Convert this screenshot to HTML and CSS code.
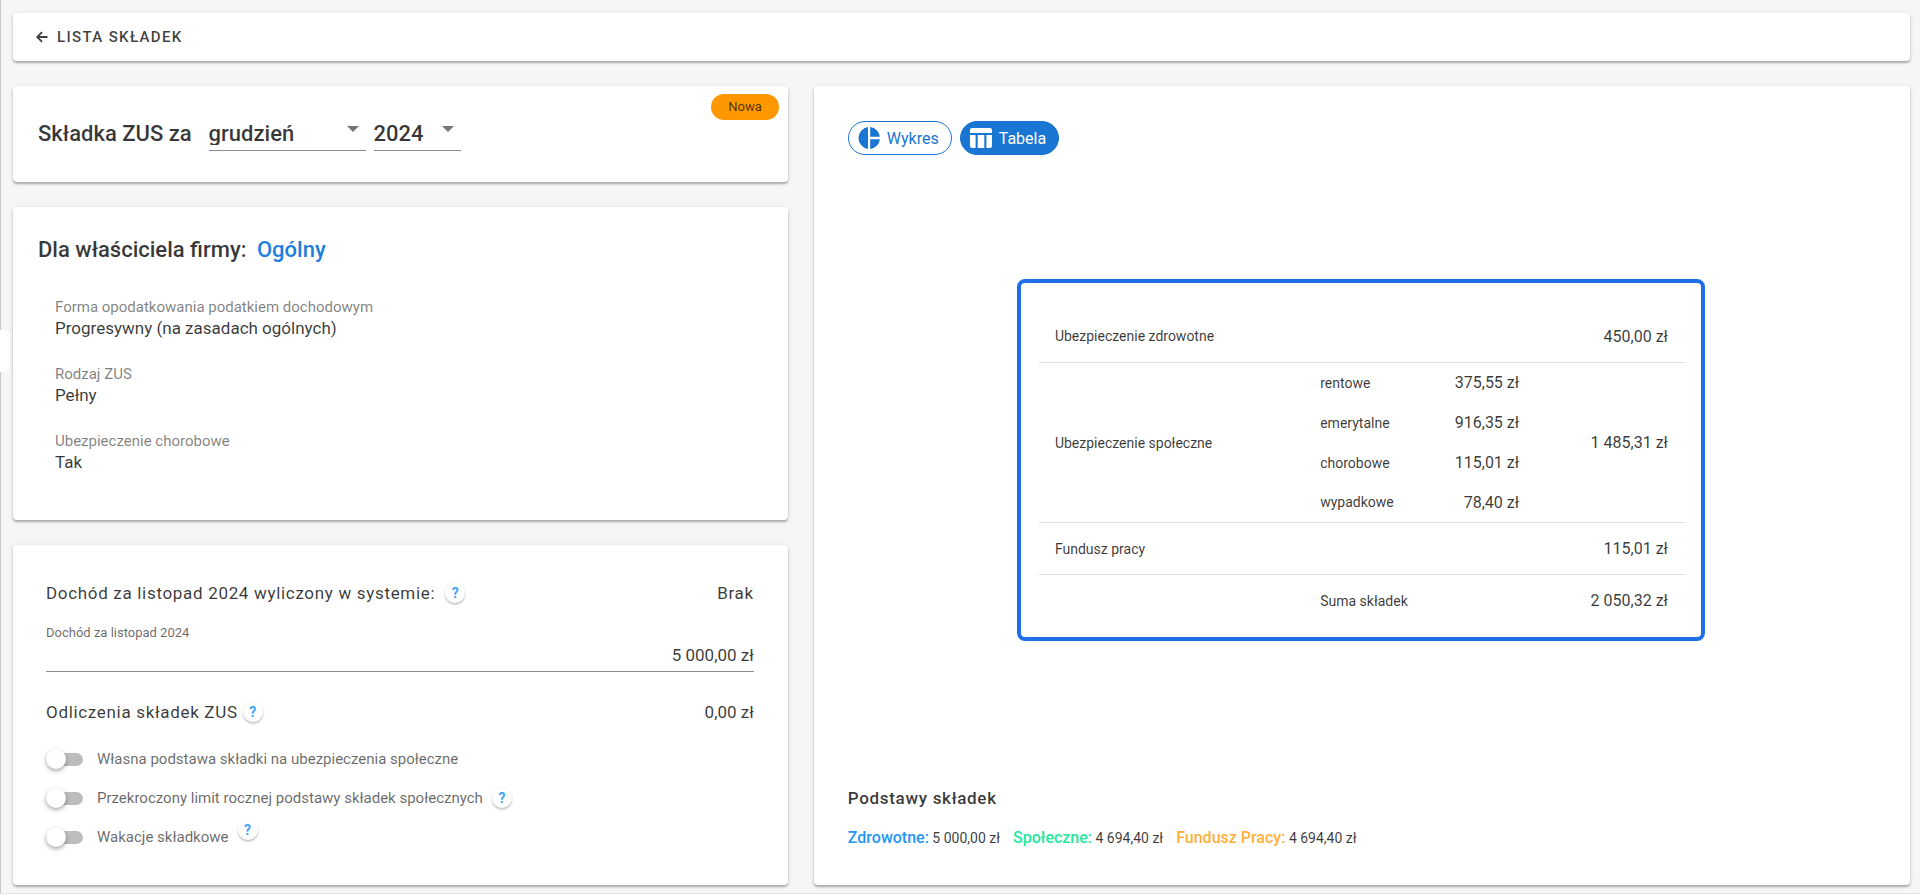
FILE: index.html
```html
<!DOCTYPE html>
<html lang="pl">
  <head>
    <meta charset="UTF-8" />
    <meta name="viewport" content="width=device-width, initial-scale=1.0" />
    <title>Składka ZUS - grudzień 2024</title>
    <link rel="stylesheet" href="styles.css">
  </head>
  <body>
    <button class="drawer-handle" type="button" aria-label="Otwórz menu"></button>

    <div class="page">
      <header class="card topbar">
        <a class="back-link" href="#">
          <svg width="12" height="12" viewBox="0 0 12 12" aria-hidden="true">
            <path d="M11.5 6H1.5M6 1.2L1.2 6L6 10.8" fill="none" stroke="currentColor" stroke-width="1.8" />
          </svg>
          LISTA SKŁADEK
        </a>
      </header>

      <main class="columns">
        <div class="left">
          <section class="card period">
            <h1 class="title">Składka ZUS za</h1>
            <div class="select month">
              <select aria-label="Miesiąc">
                <option>grudzień</option>
              </select>
            </div>
            <div class="select year">
              <select aria-label="Rok">
                <option>2024</option>
              </select>
            </div>
            <span class="badge">Nowa</span>
          </section>

          <section class="card owner">
            <h2 class="title">Dla właściciela firmy: <a href="#">Ogólny</a></h2>
            <dl class="details">
              <div>
                <dt>Forma opodatkowania podatkiem dochodowym</dt>
                <dd>Progresywny (na zasadach ogólnych)</dd>
              </div>
              <div>
                <dt>Rodzaj ZUS</dt>
                <dd>Pełny</dd>
              </div>
              <div>
                <dt>Ubezpieczenie chorobowe</dt>
                <dd>Tak</dd>
              </div>
            </dl>
          </section>

          <section class="card income">
            <div class="line">
              <span class="line-label">Dochód za listopad 2024 wyliczony w systemie:</span>
              <button class="help spaced" type="button">?</button>
              <span class="line-value tracked">Brak</span>
            </div>

            <div class="field">
              <label for="income">Dochód za listopad 2024</label>
              <input type="text" id="income" value="5 000,00 zł">
            </div>

            <div class="line">
              <span class="line-label">Odliczenia składek ZUS</span>
              <button class="help" type="button">?</button>
              <span class="line-value">0,00 zł</span>
            </div>

            <div class="toggles">
              <div class="toggle">
                <input type="checkbox" role="switch" id="own-base">
                <label for="own-base">Własna podstawa składki na ubezpieczenia społeczne</label>
              </div>
              <div class="toggle">
                <input type="checkbox" role="switch" id="limit">
                <label for="limit">Przekroczony limit rocznej podstawy składek społecznych</label>
                <button class="help" type="button">?</button>
              </div>
              <div class="toggle">
                <input type="checkbox" role="switch" id="holiday">
                <label for="holiday">Wakacje składkowe</label>
                <button class="help raised" type="button">?</button>
              </div>
            </div>
          </section>
        </div>

        <section class="card summary">
          <div class="views">
            <button class="chip" type="button">
              <svg width="22" height="22" viewBox="0 0 22 22" fill="currentColor" aria-hidden="true">
                <path d="M10 0.1V21.9A11 11 0 0 1 10 0.1zM12.2 0.1A11 11 0 0 1 21.9 9.8H12.2zM12.2 12.2H21.9A11 11 0 0 1 12.2 21.9z" />
              </svg>
              Wykres
            </button>
            <button class="chip active" type="button">
              <svg width="22" height="22" viewBox="0 0 22 22" fill="currentColor" aria-hidden="true">
                <path d="M2 1H20A2 2 0 0 1 22 3V6H0V3A2 2 0 0 1 2 1zM0 8H5.6V21H2A2 2 0 0 1 0 19zM7.7 8H14.3V21H7.7zM16.4 8H22V19A2 2 0 0 1 20 21H16.4z" />
              </svg>
              Tabela
            </button>
          </div>

          <div class="table-frame">
            <table>
              <colgroup>
                <col class="col-name">
                <col class="col-part">
                <col class="col-part">
                <col class="col-total">
              </colgroup>
              <tbody>
                <tr>
                  <th scope="row">Ubezpieczenie zdrowotne</th>
                  <td></td>
                  <td></td>
                  <td class="amount">450,00 zł</td>
                </tr>
              </tbody>
              <tbody class="social">
                <tr>
                  <th scope="rowgroup" rowspan="4">Ubezpieczenie społeczne</th>
                  <td>rentowe</td>
                  <td class="amount">375,55 zł</td>
                  <td class="amount" rowspan="4">1 485,31 zł</td>
                </tr>
                <tr>
                  <td>emerytalne</td>
                  <td class="amount">916,35 zł</td>
                </tr>
                <tr>
                  <td>chorobowe</td>
                  <td class="amount">115,01 zł</td>
                </tr>
                <tr>
                  <td>wypadkowe</td>
                  <td class="amount">78,40 zł</td>
                </tr>
              </tbody>
              <tbody>
                <tr>
                  <th scope="row">Fundusz pracy</th>
                  <td></td>
                  <td></td>
                  <td class="amount">115,01 zł</td>
                </tr>
              </tbody>
              <tbody>
                <tr>
                  <td></td>
                  <td colspan="2">Suma składek</td>
                  <td class="amount">2 050,32 zł</td>
                </tr>
              </tbody>
            </table>
          </div>

          <div class="bases">
            <h3>Podstawy składek</h3>
            <ul>
              <li><b class="health">Zdrowotne:</b> 5 000,00 zł</li>
              <li><b class="social-base">Społeczne:</b> 4 694,40 zł</li>
              <li><b class="fund">Fundusz Pracy:</b> 4 694,40 zł</li>
            </ul>
          </div>
        </section>
      </main>
    </div>
  </body>
</html>
```
FILE: styles.css
```css
* {
  box-sizing: border-box;
  margin: 0;
  padding: 0;
}

body {
  font-family: Roboto, 'Liberation Sans', sans-serif;
  font-size: 17px;
  color: rgba(0, 0, 0, 0.78);
  background: #ffffff;
}

a {
  color: #1e80dc;
  text-decoration: none;
}

button,
input,
select {
  font-family: inherit;
  color: inherit;
}

.page {
  display: flex;
  flex-direction: column;
  gap: 25px;
  padding: 13px 10px 8px 12px;
  background: #f6f6f6;
  border-left: 1px solid #c8c8ca;
  border-bottom: 1px solid #e4e4e4;
}

.drawer-handle {
  position: absolute;
  left: 0;
  top: 330px;
  width: 10px;
  height: 42px;
  background: #ffffff;
  border: none;
  border-radius: 0 6px 6px 0;
}

.card {
  background: #ffffff;
  border-radius: 4px;
  box-shadow: 0 2px 2px rgba(0, 0, 0, 0.25), 0 1px 5px rgba(0, 0, 0, 0.12);
}

.topbar {
  display: flex;
  align-items: center;
  height: 48px;
  padding: 0 23px;
}

.back-link {
  display: flex;
  align-items: center;
  gap: 9px;
  font-size: 15px;
  font-weight: 500;
  letter-spacing: 0.09em;
  color: rgba(0, 0, 0, 0.75);
}

.columns {
  display: grid;
  grid-template-columns: 41fr 58fr;
  gap: 26px;
}

.left {
  display: flex;
  flex-direction: column;
  gap: 25px;
}

.title {
  font-size: 22px;
  font-weight: 500;
  line-height: 32px;
}

/* period */

.period {
  position: relative;
  display: flex;
  align-items: flex-start;
  gap: 8px;
  height: 96px;
  padding: 32px 25px 0;
}

.period .title {
  margin-right: 9px;
}

.select {
  position: relative;
  padding: 4px 0 5px;
  border-bottom: 1px solid #8c8c8c;
}

.select::after {
  content: '';
  position: absolute;
  top: 8px;
  right: 7px;
  border: 6px solid transparent;
  border-top-color: #757575;
  border-bottom: none;
}

.select select {
  display: block;
  width: 100%;
  height: 23px;
  line-height: 23px;
  font-size: 22px;
  font-weight: 500;
  background: none;
  border: none;
  appearance: none;
}

.month {
  width: 157px;
}

.year {
  width: 87px;
}

.badge {
  position: absolute;
  top: 8px;
  right: 9px;
  padding: 0 17px;
  font-size: 13px;
  line-height: 26px;
  color: rgba(0, 0, 0, 0.7);
  background: #ff9800;
  border-radius: 13px;
}

/* owner */

.owner {
  padding: 27px 25px 47px;
}

.owner .title a {
  margin-left: 5px;
}

.details {
  display: flex;
  flex-direction: column;
  gap: 25px;
  padding: 31px 17px 0;
  line-height: 21px;
}

.details dt {
  font-size: 15px;
  color: rgba(0, 0, 0, 0.5);
}

/* income */

.income {
  padding: 35px 34px 37px 33px;
}

.line {
  display: flex;
  align-items: center;
  gap: 5px;
  line-height: 26px;
}

.line-label,
.tracked {
  font-size: 17px;
  letter-spacing: 0.04em;
}

.line-value {
  margin-left: auto;
}

.help {
  width: 20px;
  height: 20px;
  font-size: 14px;
  font-weight: 700;
  line-height: 20px;
  color: #42a5f5;
  background: #ffffff;
  border: none;
  border-radius: 50%;
  box-shadow: 0 2px 2px rgba(0, 0, 0, 0.2), 0 0 3px rgba(0, 0, 0, 0.08);
}

.spaced {
  margin-left: 5px;
}

.field {
  display: flex;
  flex-direction: column;
  margin: 19px 0 27px;
  border-bottom: 1px solid #8c8c8c;
}

.field label {
  font-size: 13px;
  line-height: 16px;
  color: rgba(0, 0, 0, 0.6);
}

.field input {
  width: 100%;
  height: 30px;
  padding-bottom: 3px;
  font-size: 17px;
  text-align: right;
  background: none;
  border: none;
}

.toggles {
  display: flex;
  flex-direction: column;
  gap: 17px;
  padding-top: 23px;
}

.toggle {
  display: flex;
  align-items: center;
  height: 22px;
}

.toggle input {
  display: flex;
  align-items: center;
  width: 37px;
  height: 13px;
  margin-right: 14px;
  background: #bdbdbd;
  border-radius: 7px;
  appearance: none;
}

.toggle input::before {
  content: '';
  width: 20px;
  height: 20px;
  background: #ffffff;
  border-radius: 50%;
  box-shadow: 0 2px 4px rgba(0, 0, 0, 0.35);
}

.toggle input:checked {
  justify-content: flex-end;
  background: #1976d2;
}

.toggle label {
  font-size: 15px;
  color: rgba(0, 0, 0, 0.6);
}

.toggle .help {
  margin-left: 9px;
}

.toggle .raised {
  align-self: flex-start;
  margin-top: -6px;
}

/* summary */

.summary {
  display: flex;
  flex-direction: column;
  justify-content: space-between;
  padding: 35px 36px 35px 34px;
}

.views {
  display: flex;
  gap: 8px;
}

.chip {
  display: flex;
  align-items: center;
  gap: 7px;
  height: 34px;
  padding: 0 12px 0 9px;
  font-size: 16px;
  color: #1976d2;
  background: #ffffff;
  border: 1px solid #1976d2;
  border-radius: 17px;
}

.chip.active {
  color: #ffffff;
  background: #1976d2;
}

.table-frame {
  align-self: center;
  width: 688px;
  max-width: 100%;
  margin-bottom: 22px;
  padding: 28px 15px 10px 18px;
  border: 4px solid #1f70e8;
  border-radius: 8px;
}

table {
  width: 100%;
  table-layout: fixed;
  border-collapse: collapse;
  font-size: 14px;
}

.col-name {
  width: 41%;
}

.col-part {
  width: 18%;
}

.col-total {
  width: 23%;
}

tbody + tbody {
  border-top: 1px solid #e0e0e0;
}

th,
td {
  height: 52px;
  padding: 0 0 0 16px;
  font-weight: 400;
  text-align: left;
}

.social td,
.social th {
  height: 40px;
}

.amount {
  padding: 0 18px 0 0;
  font-size: 16px;
  text-align: right;
}

/* bases */

.bases h3 {
  font-size: 17px;
  font-weight: 500;
  letter-spacing: 0.04em;
  line-height: 24px;
}

.bases ul {
  display: flex;
  gap: 13px;
  margin-top: 16px;
  font-size: 14px;
  line-height: 24px;
  list-style: none;
}

.bases b {
  font-size: 16px;
  font-weight: 500;
}

.health {
  color: #2196f3;
}

.social-base {
  color: #1de9a0;
}

.fund {
  color: #ffb03a;
}
```
